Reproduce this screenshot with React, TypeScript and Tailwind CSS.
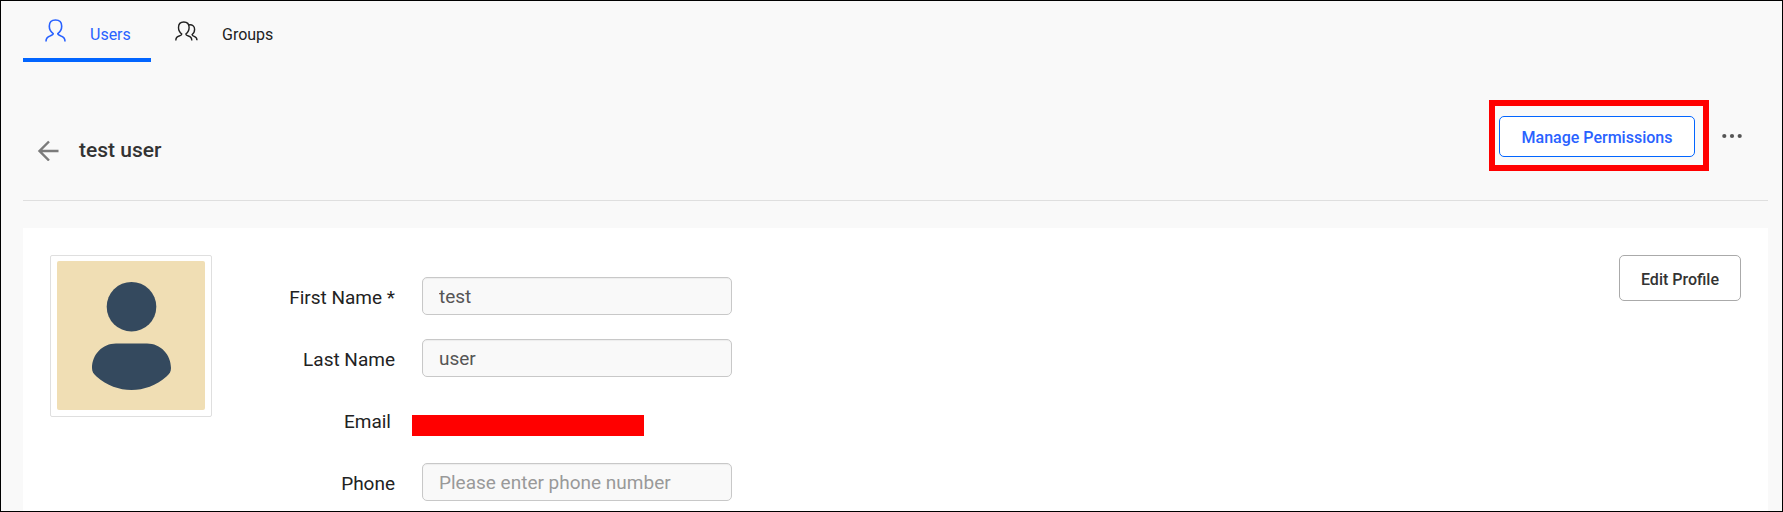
import type { ReactNode } from "react";

const userOutline =
  "M1 22.500C1 19 2.400 17.900 5 17.100C7.400 16.300 8.200 16 8.200 14.600C5.600 12.600 4.300 10.200 4.300 7.200C4.300 3 6.300 1 10.500 1C14.700 1 16.700 3 16.700 7.200C16.700 10.200 15.400 12.600 12.800 14.600C12.800 16 13.600 16.300 16 17.100C18.600 17.900 20 19 20 22.500";

function UserIcon() {
  return (
    <svg className="h-[23px] w-[21px] shrink-0" viewBox="0 0 21 23" fill="none" stroke="currentColor" strokeWidth="1.6" aria-hidden="true">
      <path d={userOutline} />
    </svg>
  );
}

function GroupIcon() {
  return (
    <svg className="h-5 w-[23px] shrink-0" viewBox="0 0 23 20" fill="none" stroke="currentColor" strokeWidth="1.4" aria-hidden="true">
      <path d="M.8 19.500C.8 16.400 2 15.600 4.200 15C6 14.500 6.800 14.200 6.800 13C4.700 11.600 3.500 9.400 3.500 6.600C3.500 2.900 5.300 1 8.800 1C12.300 1 14.100 2.900 14.100 6.600C14.100 9.400 12.900 11.600 10.800 13C10.800 14.200 11.600 14.500 13.400 15C15.600 15.600 16.800 16.400 16.800 19.500" />
      <path d="M13.400 4C17.600 3.200 19.600 5.200 19.600 8.300C19.600 10.800 18.600 12.600 17.100 13.500C17.100 14.600 17.800 14.900 19.200 15.400C21 16 22 16.600 22 19.200" />
    </svg>
  );
}

function Avatar() {
  return (
    <div className="shrink-0 rounded-xs border border-[#dfdfdf] px-[6px] pt-[5px] pb-[6px]">
      <svg className="block h-[149px] w-[148px] rounded-xs bg-[#f0deb4]" viewBox="0 0 148 149" role="img" aria-label="Profile picture" fill="#34495e">
        <circle cx="74.500" cy="45.700" r="24.800" />
        <path d="M59 82.500H90C103.500 82.500 114 93.500 114 107C114 110.500 112.500 113 109.500 115.500C99 124.500 87 129 74.500 129C62 129 50 124.500 39.500 115.500C36.500 113 35 110.500 35 107C35 93.500 45.500 82.500 59 82.500Z" />
      </svg>
    </div>
  );
}

function Field({ id, label, value, placeholder }: { id: string; label: ReactNode; value?: string; placeholder?: string }) {
  return (
    <div className="flex items-center">
      <label htmlFor={id} className="w-[183px] pt-1 text-right text-[19px] leading-6 text-[#222]">
        {label}
      </label>
      <input
        id={id}
        readOnly
        defaultValue={value}
        placeholder={placeholder}
        className="ml-[27px] h-[38px] w-[310px] rounded-[5px] border border-[#c8c8c8] bg-[#f9f9f9] px-4 text-[19px] text-[#555] inset-shadow-xs outline-none placeholder:text-[#999]"
      />
    </div>
  );
}

export default function App() {
  return (
    <div className="flex min-h-screen flex-col border border-black bg-[#f9f9f9] pr-[14px] pl-[22px] font-['Roboto',sans-serif]">
      <nav className="flex" aria-label="Directory">
        <a href="#users" aria-current="page" className="flex h-[61px] w-32 items-start gap-6 border-b-4 border-[#0265ff] pt-[18px] pl-[22px] text-base text-[#2962ff]">
          <UserIcon />
          <span className="pt-1 leading-6">Users</span>
        </a>
        <a href="#groups" className="flex items-start gap-6 pt-[20px] pl-6 text-base text-[#222]">
          <GroupIcon />
          <span className="pt-[2px] leading-6">Groups</span>
        </a>
      </nav>

      <header className="flex items-start border-b border-[#dfdfdf] pt-[38px] pb-[29px]">
        <div className="flex items-center gap-[20px] pt-[36px] pl-[14px]">
          <button type="button" aria-label="Back" className="text-[#7b7b7b]">
            <svg className="block size-[22px]" viewBox="0 0 22 22" fill="none" stroke="currentColor" strokeWidth="2.4" aria-hidden="true">
              <path d="M21.500 12H3M12 2.500L2.500 12L12 21.500" />
            </svg>
          </button>
          <h1 className="text-[21px] leading-7 font-medium text-[#333]">test user</h1>
        </div>
        <div className="ml-auto border-[6px] border-[#f00] pt-[10px] pr-2 pb-2 pl-1">
          <button type="button" className="block h-[41px] w-[196px] rounded-[5px] border border-[#0265ff] bg-white pt-[2px] text-base font-medium text-[#2962ff]">
            Manage Permissions
          </button>
        </div>
        <button type="button" aria-label="More actions" className="mt-[26px] mr-[25px] ml-3 text-[#555]">
          <svg className="block h-5 w-[22px]" viewBox="0 0 22 20" fill="currentColor" aria-hidden="true">
            <circle cx="3.300" cy="10" r="2.100" />
            <circle cx="11" cy="10" r="2.100" />
            <circle cx="18.700" cy="10" r="2.100" />
          </svg>
        </button>
      </header>

      <main className="mt-[27px] flex flex-1 items-start bg-white pt-[27px] pr-[27px] pl-[27px]">
        <Avatar />
        <form className="flex flex-col gap-6 pt-[22px] pb-[10px]">
          <Field id="first-name" label="First Name *" value="test" />
          <Field id="last-name" label="Last Name" value="user" />
          <div className="flex h-[38px] items-center">
            <span className="w-[179px] pt-1 text-right text-[19px] leading-6 text-[#222]">Email</span>
            <span className="mt-[11px] ml-[21px] h-[21px] w-[232px] bg-[#f00]" role="img" aria-label="Email hidden" />
          </div>
          <Field id="phone" label="Phone" placeholder="Please enter phone number" />
        </form>
        <button type="button" className="ml-auto h-[46px] w-[122px] rounded-[5px] border border-[#aaa] bg-white pt-[3px] text-base font-medium text-[#333]">
          Edit Profile
        </button>
      </main>
    </div>
  );
}
